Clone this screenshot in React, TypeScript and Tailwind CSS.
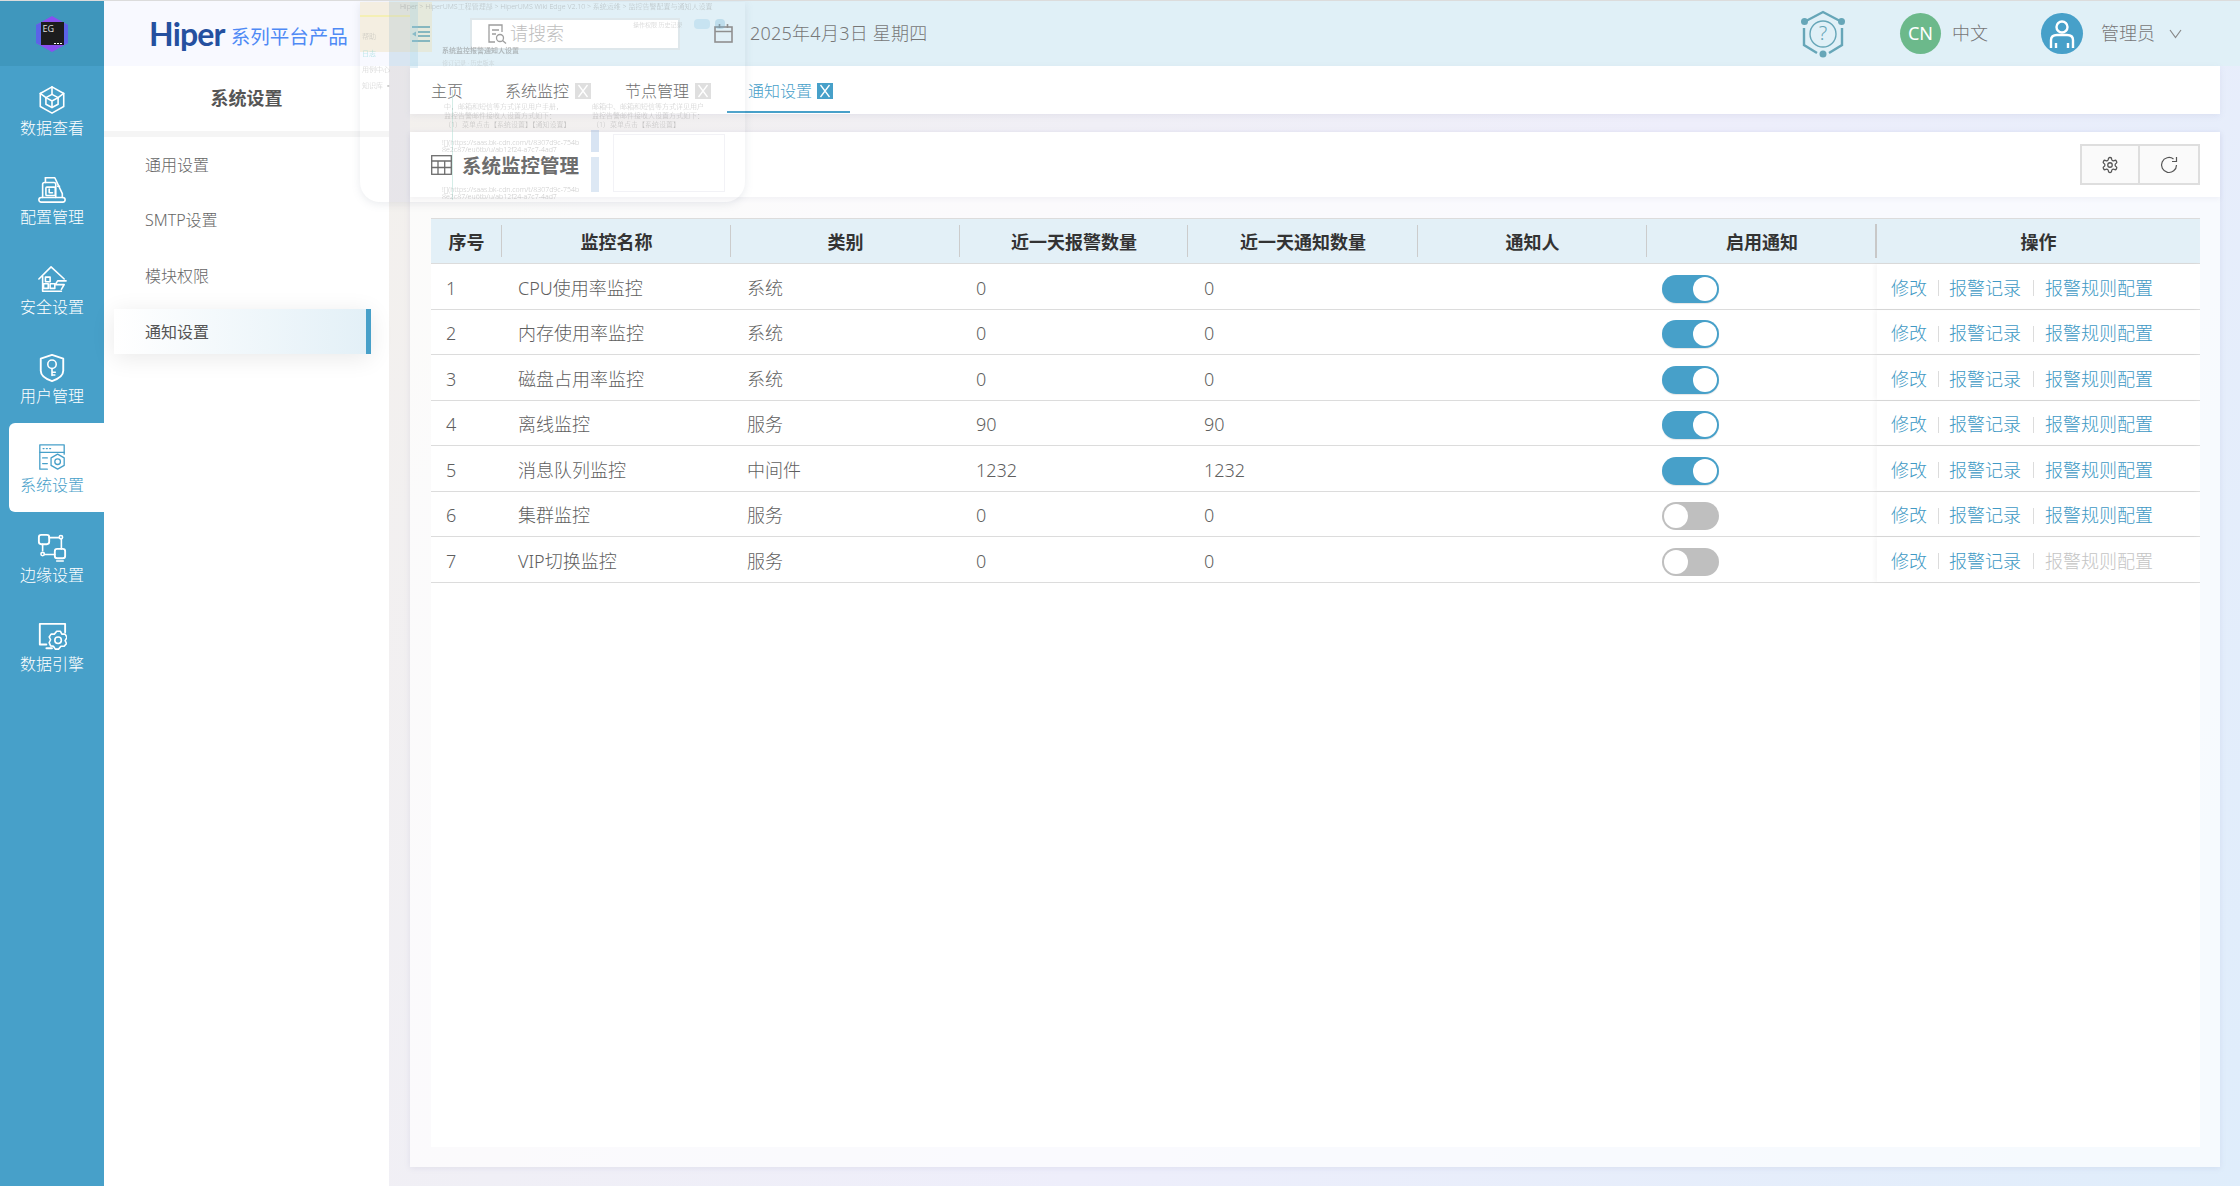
import React from "react";

const font = { fontFamily: '"Noto Sans", "Noto Sans CJK SC", sans-serif' };

const Ico = ({ children, w = 30, h = 30 }: { children: React.ReactNode; w?: number; h?: number }) => (
  <svg width={w} height={h} viewBox="0 0 32 32" fill="none" stroke="currentColor" strokeWidth="1.7" strokeLinejoin="round" strokeLinecap="round">
    {children}
  </svg>
);

const railItems: { label: string; active?: boolean; icon: React.ReactNode }[] = [
  {
    label: "数据查看",
    icon: (
      <Ico>
        <path d="M16 2 L28.5 9 V23 L16 30 L3.5 23 V9 Z" />
        <path d="M16 10 L22.5 13.5 V20.5 L16 24 L9.5 20.5 V13.5 Z" />
        <path d="M9.5 13.5 L16 17 L22.5 13.5 M16 17 V24 M3.5 9 L9.5 13.5 M28.5 9 L22.5 13.5 M16 2 V10" />
      </Ico>
    ),
  },
  {
    label: "配置管理",
    icon: (
      <Ico>
        <path d="M6 25 V11 Q6 9 8 9 H18 Q20 9 20 11 V25" />
        <path d="M9 4 H19 L27 21 V25" />
        <path d="M9 4 V9 M22 13 L24 13" />
        <rect x="9.5" y="14" width="10" height="9" rx="1" />
        <path d="M13 16 V20 H16.5" />
        <rect x="2" y="25" width="28" height="5" rx="2.5" />
      </Ico>
    ),
  },
  {
    label: "安全设置",
    icon: (
      <Ico>
        <path d="M2 16 L15 3 L29 16 M6 13 V29 H26" />
        <rect x="9" y="14" width="5" height="5" />
        <rect x="7" y="21" width="5" height="5" />
        <rect x="14" y="21" width="5" height="5" />
        <path d="M31 18 H22 L19.5 22 H29 L26 27" />
      </Ico>
    ),
  },
  {
    label: "用户管理",
    icon: (
      <Ico>
        <path d="M16 2 L28 6 V19 Q28 26 16 30 Q4 26 4 19 V6 Z" strokeWidth="2" />
        <circle cx="16" cy="12" r="4.5" />
        <path d="M16 16.5 V24 M16 20.5 H19.5 M16 23.5 H19" />
      </Ico>
    ),
  },
  {
    label: "系统设置",
    active: true,
    icon: (
      <Ico>
        <rect x="3" y="3" width="26" height="8" strokeWidth="1.4" />
        <path d="M3 11 V29 H11 M29 11 V13 M6.5 7 H7.5 M10 7 H11 M13.5 7 H14.5 M6 17 H11 M6 23 H11" strokeWidth="1.4" />
        <path d="M22 13 L29 17 V25 L22 29 L15 25 V17 Z" strokeWidth="1.4" />
        <circle cx="22" cy="21" r="3" strokeWidth="1.4" />
      </Ico>
    ),
  },
  {
    label: "边缘设置",
    icon: (
      <Ico>
        <rect x="2" y="3" width="11" height="10" rx="2.5" strokeWidth="2" />
        <rect x="19" y="18" width="11" height="10" rx="2.5" strokeWidth="2" />
        <path d="M13 6 H24 M26 7 V18 M19 24 H8 M6 20 V13 M21 31 H28" />
        <circle cx="25.5" cy="5.5" r="1.8" />
        <circle cx="6" cy="23.5" r="1.8" />
      </Ico>
    ),
  },
  {
    label: "数据引擎",
    icon: (
      <Ico>
        <path d="M30 12 V3 H3 V25 H10 M10 29 H16" strokeWidth="2" />
        <path d="M21 11 H25 L26.5 14 L30 14 L32 17.5 L30 21 L31.5 24 L29 27 L25.5 27 L23 30 L19.5 30 L17.5 27 L14.5 26.5 L13 23 L14.5 20 L13 17 L15 14 L18.5 14 Z" />
        <circle cx="22.5" cy="20.5" r="3.5" />
      </Ico>
    ),
  },
];

const rows: [string, string, string, string, string, boolean, boolean][] = [
  ["1", "CPU使用率监控", "系统", "0", "0", true, true],
  ["2", "内存使用率监控", "系统", "0", "0", true, true],
  ["3", "磁盘占用率监控", "系统", "0", "0", true, true],
  ["4", "离线监控", "服务", "90", "90", true, true],
  ["5", "消息队列监控", "中间件", "1232", "1232", true, true],
  ["6", "集群监控", "服务", "0", "0", false, true],
  ["7", "VIP切换监控", "服务", "0", "0", false, false],
];

const cols = "grid grid-cols-[71px_229px_229px_228px_230px_229px_230px_323px]";
const headers = ["序号", "监控名称", "类别", "近一天报警数量", "近一天通知数量", "通知人", "启用通知", "操作"];

const TabX = ({ active }: { active?: boolean }) => (
  <span className={active ? "ml-[5px] flex h-4 w-4 items-center justify-center bg-[#47a0c9]" : "ml-[6px] flex h-4 w-4 items-center justify-center bg-[#dedede]"}>
    <svg width="16" height="16" viewBox="0 0 16 16" stroke="#fff" strokeWidth="1.3" fill="none">
      <path d="M3.5 2 L12.5 14 M12.5 2 L3.5 14" />
    </svg>
  </span>
);

const Ghost = () => (
  <div className="pointer-events-none absolute left-[360px] top-px h-[200px] w-[385px] overflow-hidden rounded-b-[20px] bg-white/5 shadow-[0_2px_8px_rgba(120,130,150,0.16)] blur-[0.4px]">
    <div className="absolute left-0 top-0 h-[50px] w-[72px] bg-[#ecd9a8]/35" />
    <div className="absolute left-0 top-[13px] h-[2px] w-[50px] bg-[#f4ef8a]/50" />
    <div className="absolute left-[29px] top-0 h-[200px] w-[21px] bg-[#b4bad6]/20" />
    <div className="absolute left-[50px] top-0 h-[66px] w-[8px] bg-[#8fc4e0]/25" />
    <div className="absolute left-[92px] top-[88px] h-[110px] w-px bg-[#a9dcd0]/50" />
    <div className="absolute left-[231px] top-[128px] h-[22px] w-[8px] bg-[#8fb2dc]/35" />
    <div className="absolute left-[231px] top-[155px] h-[35px] w-[8px] bg-[#8fb2dc]/30" />
    <div className="absolute left-[253px] top-[132px] h-[58px] w-[112px] border border-[#d9dbe4]/35" />
    <div className="absolute left-[334px] top-[17px] h-[10px] w-[16px] rounded-sm bg-[#8cc4e0]/30" />
    <div className="absolute left-[355px] top-[17px] h-[10px] w-[10px] rounded-sm bg-[#6cb0d0]/30" />
    <div className="absolute left-[2px] top-[30px] text-[7px] text-[#999]/50">帮助</div>
    <div className="absolute left-[2px] top-[47px] text-[7px] text-[#6cc]/60">日志</div>
    <div className="absolute left-[2px] top-[63px] text-[7px] text-[#999]/50">用例中心</div>
    <div className="absolute left-[2px] top-[79px] text-[7px] text-[#999]/50">知识库 ▪</div>
    <div className="absolute left-[40px] top-[0px] whitespace-nowrap text-[7px] text-[#888]/45">Hiper &gt; HiperUMS工程管理部 &gt; HiperUMS Wiki Edge V2.10 &gt; 系统运维 &gt; 监控告警配置与通知人设置</div>
    <div className="absolute left-[82px] top-[44px] whitespace-nowrap text-[7px] font-bold text-[#777]/45">系统监控报警通知人设置</div>
    <div className="absolute left-[82px] top-[57px] whitespace-nowrap text-[6px] text-[#999]/40">修订记录 · 历史版本</div>
    <div className="absolute left-[273px] top-[19px] whitespace-nowrap text-[6px] text-[#999]/50">操作权限 历史记录</div>
    <div className="absolute left-[84px] top-[100px] whitespace-pre text-[7px] leading-[9px] text-[#777]/40">{"中，邮箱和短信等方式详见用户手册，\n监控告警邮件接收人设置方式如下：\n（1）菜单点击【系统设置】【通知设置】"}</div>
    <div className="absolute left-[82px] top-[137px] whitespace-pre text-[7px] leading-[7px] text-[#777]/40">{"![](https://saas.bk-cdn.com/t/8307d9c-754b\n8e2c87/eu6tb/u/ab12f24-a7c7-4ad7"}</div>
    <div className="absolute left-[82px] top-[184px] whitespace-pre text-[7px] leading-[7px] text-[#777]/40">{"![](https://saas.bk-cdn.com/t/8307d9c-754b\n8e2c87/eu6tb/u/ab12f24-a7c7-4ad7"}</div>
    <div className="absolute left-[232px] top-[100px] whitespace-pre text-[7px] leading-[9px] text-[#777]/40">{"邮箱中、邮箱和短信等方式详见用户\n监控告警邮件接收人设置方式如下：\n（1）菜单点击【系统设置】"}</div>
  </div>
);

export default function App() {
  return (
    <div
      style={font}
      className="relative flex h-[1186px] w-[2240px] overflow-hidden border-t border-[#dcdcdc] bg-[linear-gradient(120deg,#f5f1e7_0%,#f0eff6_40%,#eeeefb_60%,#dfedfb_100%)] font-light"
    >
      {/* Rail */}
      <aside className="flex w-[104px] shrink-0 flex-col bg-[#47a0c9] text-[16px] text-white">
        <div className="flex h-[65px] items-center justify-center bg-[#3f97bd]">
          <div className="relative flex h-9 w-8 items-center justify-center">
            <svg className="absolute inset-0" width="32" height="36" viewBox="0 0 32 36">
              <path d="M16 0 L32 9 V27 L16 36 L0 27 V9 Z" fill="#8a4ff0" />
              <path d="M0 9 L5 7 V29 L0 27 Z M32 9 L27 7 V29 L32 27 Z" fill="#5a63e8" />
            </svg>
            <div className="relative h-[23px] w-[23px] bg-[#1c1c1e] pl-[2px] text-[9px] font-normal leading-[13px] text-[#ddd]">
              EG
              <span className="absolute bottom-[1px] right-[2px] flex gap-[1.5px]">
                <i className="h-[1.5px] w-[1.5px] bg-white" />
                <i className="h-[1.5px] w-[1.5px] bg-white" />
                <i className="h-[1.5px] w-[1.5px] bg-white" />
              </span>
            </div>
          </div>
        </div>
        {railItems.map((it) => (
          <div
            key={it.label}
            className={
              it.active
                ? "ml-[9px] flex h-[89.3px] w-[95px] flex-col items-center justify-center gap-[2px] rounded-l-md bg-white pr-[9px] pt-[3px] text-[#47a0c9]"
                : "ml-[9px] flex h-[89.3px] w-[95px] flex-col items-center justify-center gap-[2px] pr-[9px] pt-[3px]"
            }
          >
            {it.icon}
            <span className="leading-[22px]">{it.label}</span>
          </div>
        ))}
      </aside>

      {/* Secondary */}
      <aside className="flex w-[285px] shrink-0 flex-col bg-white">
        <div className="flex h-[65px] items-center bg-[#f8f9ff] pl-[45px]">
          <span className="text-[32px] font-bold leading-none tracking-[-0.8px] text-[#25509f] [font-family:Lato,sans-serif]">Hiper</span>
          <span className="ml-[6px] mt-[7px] text-[19.5px] font-normal leading-none text-[#4f8af5]">系列平台产品</span>
        </div>
        <div className="flex h-[65px] items-center justify-center text-[18px] font-bold text-[#555]">系统设置</div>
        <div className="h-[6px] bg-[#f5f5f5]" />
        <nav className="flex flex-col gap-[10.7px] pt-[5px] text-[16px] text-[#666]">
          <div className="flex h-[45px] items-center pl-[41px]">通用设置</div>
          <div className="flex h-[45px] items-center pl-[41px]">SMTP设置</div>
          <div className="flex h-[45px] items-center pl-[41px]">模块权限</div>
          <div className="ml-[10px] flex h-[45px] w-[257px] items-center border-r-[5px] border-[#47a0c9] bg-[linear-gradient(90deg,#ffffff,#e3f0f7)] pl-[31px] font-normal text-[#555] shadow-[0_4px_24px_rgba(0,0,0,0.09)]">
            通知设置
          </div>
        </nav>
      </aside>

      {/* Main */}
      <main className="flex min-w-0 flex-1 flex-col">
        <header className="flex h-[65px] shrink-0 items-center bg-[#e0f0f7] text-[18px] text-[#777]">
          <svg className="ml-[23px]" width="18" height="16" viewBox="0 0 18 16" fill="none" stroke="#47a0c9" strokeWidth="1.8">
            <path d="M0 1 H18 M6 6 H18 M6 10 H18 M0 15 H18" />
            <path d="M0 8 L4 5.5 V10.5 Z" fill="#47a0c9" stroke="none" />
          </svg>
          <div className="ml-[40px] flex h-[32px] w-[210px] items-center border-2 border-[#dde6ea] bg-white pl-[15px] text-[#bbb]">
            <svg width="20" height="20" viewBox="0 0 20 20" fill="none" stroke="#999" strokeWidth="1.3">
              <path d="M8 18 H2 V1 H15 V8 M5 6 H12 M5 10 H9" />
              <circle cx="13" cy="14" r="3.5" />
              <path d="M15.5 16.5 L19 19.5" />
            </svg>
            <span className="ml-[3px]">请搜索</span>
          </div>
          <svg className="ml-[34px]" width="19" height="19" viewBox="0 0 19 19" fill="none" stroke="#8a8a8a" strokeWidth="1.6">
            <rect x="1" y="3" width="17" height="15" />
            <path d="M1 7.5 H18 M5.5 0 V4 M13.5 0 V4" />
          </svg>
          <span className="ml-[17px] whitespace-nowrap tracking-[0.25px]">2025年4月3日 星期四</span>
          <svg className="ml-auto" width="46" height="48" viewBox="0 0 46 48" fill="none" stroke="#66a6b8" strokeWidth="2.4">
            <path d="M6 11 L23 2 L40 11 M42 18 V35 L29 43 M17 43 L4 35 V18" />
            <circle cx="23" cy="24" r="13" strokeWidth="1.4" />
            <circle cx="4.5" cy="11.5" r="3.5" fill="#66a6b8" stroke="none" />
            <circle cx="41.5" cy="11.5" r="3.5" fill="#66a6b8" stroke="none" />
            <circle cx="23" cy="44" r="3.5" fill="#66a6b8" stroke="none" />
          </svg>
          <div className="relative -ml-[46px] mr-[54px] flex h-12 w-[46px] items-center justify-center pb-[1px] text-[20px] leading-none text-[#66a6b8]">?</div>
          <div className="flex h-[41px] w-[41px] items-center justify-center rounded-full bg-[#6cb98b] font-normal text-white">CN</div>
          <span className="ml-[11px]">中文</span>
          <div className="ml-[53px] flex h-[41px] w-[42px] items-center justify-center rounded-full bg-[#47a0c9]">
            <svg width="28" height="32" viewBox="0 0 28 32" fill="none" stroke="#fff" strokeWidth="2.4">
              <circle cx="14" cy="9" r="5.5" />
              <path d="M3 30 V22 Q3 17 9 17 H19 Q25 17 25 22 V30 M8 25 V30 M20 25 V30" />
            </svg>
          </div>
          <span className="ml-[18px]">管理员</span>
          <svg className="ml-[14px] mr-[58px]" width="13" height="10" viewBox="0 0 13 10" fill="none" stroke="#888" strokeWidth="1.2">
            <path d="M1 1 L6.5 8.5 L12 1" />
          </svg>
        </header>

        <div className="flex flex-1 flex-col pb-[19px] pl-[21px] pr-[20px]">
          {/* Tabs */}
          <div className="flex h-[48px] shrink-0 items-center bg-white text-[16px] text-[#666] shadow-[0_2px_6px_rgba(130,130,170,0.12)]">
            <div className="flex h-full items-center pl-[21px] pr-[21px] pt-[2px]">主页</div>
            <div className="flex h-full items-center pl-[21px] pr-[13px] pt-[2px]">
              系统监控
              <TabX />
            </div>
            <div className="flex h-full items-center pl-[21px] pr-[16px] pt-[2px]">
              节点管理
              <TabX />
            </div>
            <div className="relative flex h-full items-center pl-[21px] pr-[17px] pt-[2px] text-[#47a0c9]">
              通知设置
              <TabX active />
              <span className="absolute bottom-[1px] left-0 right-0 h-[2px] bg-[#47a0c9]" />
            </div>
          </div>

          {/* Card */}
          <section className="mt-[18px] flex flex-1 flex-col bg-white/70 shadow-[0_1px_6px_rgba(130,130,170,0.14)]">
            <div className="flex h-[65px] shrink-0 items-center bg-white pl-[21px] pr-[20px] shadow-[0_2px_5px_rgba(130,130,170,0.08)]">
              <svg width="21" height="20" viewBox="0 0 21 20" fill="none" stroke="#666" strokeWidth="1.3">
                <rect x="0.7" y="0.7" width="19.6" height="18.6" />
                <path d="M0.7 6 H20.3 M0.7 12.5 H20.3 M7 6 V19.3 M13.7 6 V19.3" />
              </svg>
              <span className="ml-[10px] pt-[2px] text-[19.5px] font-bold text-[#666]">系统监控管理</span>
              <div className="ml-auto flex">
                <div className="flex h-[41px] w-[60px] items-center justify-center border-2 border-[#dedede] bg-[#fafafa]">
                  <svg width="18" height="18" viewBox="0 0 24 24" fill="none" stroke="#555" strokeWidth="1.7" strokeLinecap="round" strokeLinejoin="round">
                    <path d="M12.22 2h-.44a2 2 0 0 0-2 2v.18a2 2 0 0 1-1 1.73l-.43.25a2 2 0 0 1-2 0l-.15-.08a2 2 0 0 0-2.73.73l-.22.38a2 2 0 0 0 .73 2.73l.15.1a2 2 0 0 1 1 1.72v.51a2 2 0 0 1-1 1.74l-.15.09a2 2 0 0 0-.73 2.73l.22.38a2 2 0 0 0 2.73.73l.15-.08a2 2 0 0 1 2 0l.43.25a2 2 0 0 1 1 1.73V20a2 2 0 0 0 2 2h.44a2 2 0 0 0 2-2v-.18a2 2 0 0 1 1-1.73l.43-.25a2 2 0 0 1 2 0l.15.08a2 2 0 0 0 2.73-.73l.22-.39a2 2 0 0 0-.73-2.73l-.15-.08a2 2 0 0 1-1-1.74v-.5a2 2 0 0 1 1-1.74l.15-.09a2 2 0 0 0 .73-2.73l-.22-.38a2 2 0 0 0-2.73-.73l-.15.08a2 2 0 0 1-2 0l-.43-.25a2 2 0 0 1-1-1.73V4a2 2 0 0 0-2-2z" />
                    <circle cx="12" cy="12" r="3" />
                  </svg>
                </div>
                <div className="flex h-[41px] w-[60px] items-center justify-center border-2 border-l-0 border-[#dedede] bg-[#fafafa]">
                  <svg width="18" height="18" viewBox="0 0 18 18" fill="none" stroke="#555" strokeWidth="1.2">
                    <path d="M16.5 9 A7.5 7.5 0 1 1 13.5 3" />
                    <path d="M16.5 1 V5.5 H12" />
                  </svg>
                </div>
              </div>
            </div>

            {/* Table */}
            <div className="mb-[20px] ml-[21px] mr-[20px] mt-[21px] flex-1 border-t border-[#dcdcdc] bg-white text-[18px] text-[#5f5f5f]">
              <div className={`${cols} h-[45px] border-b border-[#dcdcdc] bg-[#e3f0f7] text-[18px] font-bold text-[#333]`}>
                {headers.map((h, i) => (
                  <div key={h} className="relative flex items-center justify-center pt-[3px]">
                    {h}
                    {i < 7 && <span className={i === 6 ? "absolute bottom-[5px] right-0 top-[5px] w-[2px] bg-[#c8c8c8]" : "absolute bottom-[6px] right-0 top-[6px] w-px bg-[#cccccc]"} />}
                  </div>
                ))}
              </div>
              {rows.map(([n, name, type, a, b, on, cfg]) => (
                <div key={n} className={`${cols} h-[45.5px] border-b border-[#dcdcdc]`}>
                  <div className="flex items-center pl-[15px] pt-[4px]">{n}</div>
                  <div className="flex items-center pl-[16px] pt-[4px]">{name}</div>
                  <div className="flex items-center pl-[16px] pt-[4px]">{type}</div>
                  <div className="flex items-center pl-[16px] pt-[4px]">{a}</div>
                  <div className="flex items-center pl-[16px] pt-[4px]">{b}</div>
                  <div />
                  <div className="flex items-center pl-[15px] pt-[5px]">
                    {on ? (
                      <div className="flex h-[28px] w-[57px] items-center justify-end rounded-full bg-[#47a0c9] pr-[2px] shadow-[0_1px_1px_rgba(0,0,0,0.1)]">
                        <span className="h-[24px] w-[24px] rounded-full bg-white" />
                      </div>
                    ) : (
                      <div className="flex h-[28px] w-[57px] items-center rounded-full bg-[#bfbfbf] pl-[2px]">
                        <span className="h-[24px] w-[24px] rounded-full bg-white" />
                      </div>
                    )}
                  </div>
                  <div className="flex items-center pl-[14px] pt-[4px] text-[#4099c4] shadow-[-3px_0_4px_rgba(0,0,0,0.03)]">
                    <span>修改</span>
                    <span className="mx-[10.5px] h-[16px] w-px bg-[#dcdcdc]" />
                    <span>报警记录</span>
                    <span className="mx-[11.5px] h-[16px] w-px bg-[#dcdcdc]" />
                    <span className={cfg ? "" : "text-[#c4c4c4]"}>报警规则配置</span>
                  </div>
                </div>
              ))}
            </div>
          </section>
        </div>
      </main>

      <Ghost />
    </div>
  );
}
